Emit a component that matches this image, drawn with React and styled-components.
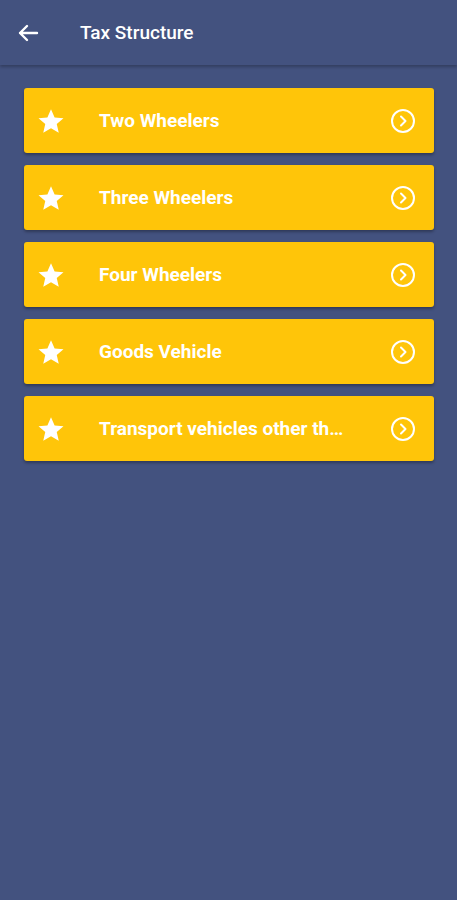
import React from 'react';
import styled, { createGlobalStyle } from 'styled-components';

const GlobalStyle = createGlobalStyle`
    html, body {
        margin: 0;
        padding: 0;
        background-color: #43527f;
        font-family: Roboto, "Noto Sans", sans-serif;
    }
`

const Page = styled.div`
    width: 457px;
    min-height: 900px;
    background-color: #43527f;
`

const Header = styled.header`
    display: flex;
    align-items: center;
    height: 65px;
    padding: 0 16px;
    background-color: #43527f;
    box-shadow: 0 2px 3px rgba(0, 0, 0, 0.25);
    position: relative;
    z-index: 1;
`

const BackButton = styled.button`
    display: flex;
    align-items: center;
    justify-content: center;
    width: 24px;
    height: 24px;
    padding: 0;
    margin-right: 40px;
    border: none;
    background: none;
    cursor: pointer;
`

const Title = styled.h1`
    margin: 0;
    font-size: 19px;
    font-weight: 500;
    color: #ffffff;
`

const List = styled.div`
    display: flex;
    flex-direction: column;
    gap: 12px;
    padding: 23px 23px 0 24px;
`

const Card = styled.div`
    display: flex;
    align-items: center;
    height: 65px;
    padding: 0 18px 0 12px;
    background-color: #ffc509;
    border-radius: 3px;
    box-shadow: 0 2px 3px rgba(0, 0, 0, 0.3);
    cursor: pointer;
`

const Label = styled.span`
    flex: 1;
    min-width: 0;
    margin-left: 33px;
    font-size: 19px;
    font-weight: 700;
    color: #ffffff;
    white-space: nowrap;
`

function Star() {
    return (
        <svg width="30" height="30" viewBox="0 0 24 24">
            <path fill="#fff" d="M12 2.5l2.9 6.6 7.1.6-5.4 4.7 1.6 7-6.2-3.7-6.2 3.7 1.6-7L2 9.7l7.1-.6z" />
        </svg>
    )
}

function Chevron() {
    return (
        <svg width="26" height="26" viewBox="0 0 26 26" fill="none" stroke="#fff" strokeWidth="2">
            <circle cx="13" cy="13" r="11" />
            <path d="M11 8.5l4.5 4.5-4.5 4.5" strokeLinecap="round" strokeLinejoin="round" />
        </svg>
    )
}

const items = [
    'Two Wheelers',
    'Three Wheelers',
    'Four Wheelers',
    'Goods Vehicle',
    'Transport vehicles other th…',
]

function App() {
    return (
        <Page>
            <GlobalStyle />
            <Header>
                <BackButton>
                    <svg width="24" height="24" viewBox="0 0 24 24" fill="none" stroke="#fff" strokeWidth="2.4" strokeLinecap="round" strokeLinejoin="round">
                        <path d="M21 12H4M11 5l-7 7 7 7" />
                    </svg>
                </BackButton>
                <Title>Tax Structure</Title>
            </Header>
            <List>
                {items.map(item => (
                    <Card key={item}>
                        <Star />
                        <Label>{item}</Label>
                        <Chevron />
                    </Card>
                ))}
            </List>
        </Page>
    );
}

export default App;
